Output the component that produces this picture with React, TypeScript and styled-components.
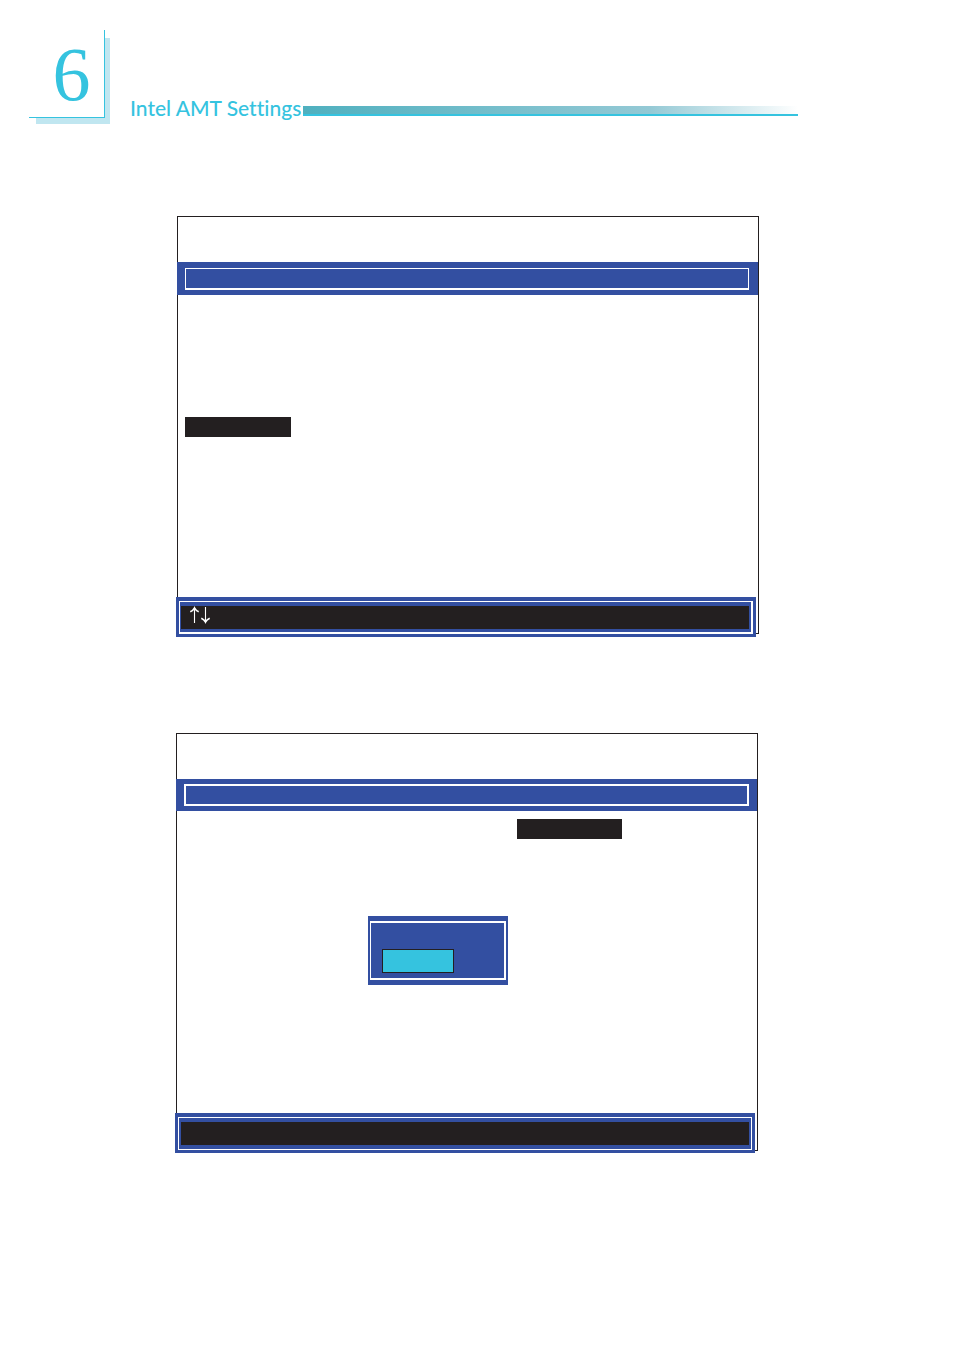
import React from "react";
import styled, { createGlobalStyle } from "styled-components";

const cyan = "#35c3df";
const blue = "#334fa1";
const ink = "#231f20";

const GlobalStyle = createGlobalStyle`
  * { box-sizing: border-box; }
  body { margin: 0; background: #fff; }
`;

const Page = styled.div`
  padding-bottom: 196px;
`;

const Header = styled.header`
  display: flex;
  align-items: flex-end;
  height: 124px;
  padding: 0 156px 0 29px;
`;

const Chapter = styled.div`
  flex: none;
  display: flex;
  align-items: center;
  justify-content: center;
  width: 76px;
  height: 88px;
  margin: 0 25px 6px 0;
  padding-left: 10px;
  background: #fff;
  border-right: 1px solid ${cyan};
  border-bottom: 1px solid ${cyan};
  box-shadow: 6px 7px 0 -1px #c0e6f0;
  color: ${cyan};
  font: 76px/88px "Liberation Serif", serif;
`;

const Title = styled.h1`
  flex: none;
  width: 173px;
  margin: 0;
  color: ${cyan};
  font: 500 21px/32px Lato, sans-serif;
  font-variant-ligatures: none;
  white-space: nowrap;
`;

const Rule = styled.div`
  flex: 1;
  height: 10px;
  margin-bottom: 8px;
  border-bottom: 2px solid ${cyan};
  background: linear-gradient(to right, #4fb0bf, #94c9d5 70%, #fff);
`;

const Section = styled.section<{ $top: number; $left: number; $right: number }>`
  padding: ${(p) => `${p.$top}px ${p.$right}px 0 ${p.$left}px`};
`;

const Screen = styled.div`
  border: 1px solid ${ink};
  padding-top: 45px;
`;

const Band = styled.div<{ $pad: string }>`
  margin-left: -1px;
  padding: ${(p) => p.$pad};
  background: ${blue};
`;

const BandFrame = styled.div<{ $line: string }>`
  height: 22px;
  border: solid #fff;
  border-width: ${(p) => p.$line};
`;

const Body = styled.div<{ $top: number; $left: number }>`
  min-height: 302px;
  padding: ${(p) => `${p.$top}px 0 0 ${p.$left}px`};
`;

const Highlight = styled.div<{ $indent?: number; $width: number }>`
  width: ${(p) => p.$width}px;
  height: 20px;
  margin-left: ${(p) => p.$indent ?? 0}px;
  background: ${ink};
`;

const Dialog = styled.div`
  width: 140px;
  margin: 77px 0 0 184px;
  padding: 5px 2px;
  background: ${blue};
`;

const DialogFrame = styled.div`
  height: 59px;
  padding: 26px 11px 0;
  border: solid #fff;
  border-width: 2px 2px 2px 1px;
`;

const Option = styled.button`
  display: block;
  width: 72px;
  height: 24px;
  padding: 0;
  border: 1px solid ${ink};
  border-radius: 0;
  background: ${cyan};
`;

const Footer = styled.div<{ $drop: number }>`
  margin: ${(p) => `0 2px -${p.$drop}px -2px`};
  padding: 4px 3px 3px;
  background: ${blue};
`;

const FooterFrame = styled.div<{ $line: string; $pad: string }>`
  height: 33px;
  padding: ${(p) => p.$pad};
  border: solid #fff;
  border-width: ${(p) => p.$line};
  background: ${blue};
`;

const Keys = styled.div`
  display: flex;
  height: 100%;
  padding-left: 8px;
  background: ${ink};
`;

const Arrows = styled.svg`
  width: 23px;
  height: 18px;
  fill: none;
  stroke: #fff;
`;

export default function App() {
  return (
    <Page>
      <GlobalStyle />
      <Header>
        <Chapter>6</Chapter>
        <Title>Intel AMT Settings</Title>
        <Rule />
      </Header>
      <main>
        <Section $top={92} $left={177} $right={195}>
          <Screen>
            <Band $pad="6px 9px 5px 8px">
              <BandFrame $line="1px 1px 2px" />
            </Band>
            <Body $top={122} $left={7}>
              <Highlight $width={106} />
            </Body>
            <Footer $drop={4}>
              <FooterFrame $line="1px 2px 2px 1px" $pad="4px 2px 3px 1px">
                <Keys>
                  <Arrows viewBox="0 0 23 18" role="img" aria-label="Up and down arrow keys">
                    <path d="M5.5 2v15M16.5 1v15" strokeWidth="1.1" />
                    <path d="M1.3 5.8Q4.2 4.4 5.5 1.8Q6.8 4.4 9.7 5.8M12.3 12.2Q15.2 13.6 16.5 16.2Q17.8 13.6 20.7 12.2" strokeWidth="1.5" />
                  </Arrows>
                </Keys>
              </FooterFrame>
            </Footer>
          </Screen>
        </Section>
        <Section $top={99} $left={176} $right={196}>
          <Screen>
            <Band $pad="5px 8px 5px 8px">
              <BandFrame $line="2px" />
            </Band>
            <Body $top={8} $left={7}>
              <Highlight $indent={333} $width={105} />
              <Dialog role="dialog">
                <DialogFrame>
                  <Option type="button" />
                </DialogFrame>
              </Dialog>
            </Body>
            <Footer $drop={3}>
              <FooterFrame $line="1px" $pad="4px 2px">
                <Keys />
              </FooterFrame>
            </Footer>
          </Screen>
        </Section>
      </main>
    </Page>
  );
}
